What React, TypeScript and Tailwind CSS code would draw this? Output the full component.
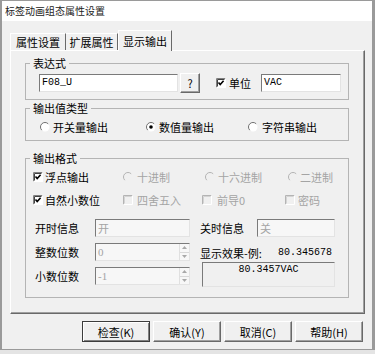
import type { ReactNode } from 'react'

function CheckBox({ checked = false, disabled = false }: { checked?: boolean; disabled?: boolean }) {
  return (
    <svg width="10" height="10" viewBox="0 0 10 10" className="shrink-0">
      <rect x="0" y="0" width="10" height="10" fill={disabled ? '#f0f0f0' : '#fff'} />
      <path d="M0.5 9.5V0.5H9.5" stroke={disabled ? '#b4b4b4' : '#808080'} fill="none" />
      <path d="M1.5 8.5V1.5H8.5" stroke={disabled ? '#d4d4d4' : '#404040'} fill="none" />
      <path d="M0.5 9.5H9.5V0.5" stroke="#fff" fill="none" />
      {checked && <path d="M2.5 4.6 L4.2 6.6 L7.6 2.8" stroke="#000" strokeWidth="1.6" fill="none" />}
    </svg>
  )
}

function Radio({ checked = false, disabled = false }: { checked?: boolean; disabled?: boolean }) {
  return (
    <svg width="10" height="10" viewBox="0 0 10 10" className="shrink-0">
      <circle cx="5" cy="5" r="4.5" fill={disabled ? '#f0f0f0' : '#fff'} />
      <path d="M8.2 1.8A4.5 4.5 0 0 0 1.8 8.2" stroke={disabled ? '#b4b4b4' : '#707070'} fill="none" />
      {checked && <circle cx="5" cy="5" r="1.8" fill="#000" />}
    </svg>
  )
}

function Group({ title, className = '', children }: { title: string; className?: string; children: ReactNode }) {
  return (
    <fieldset className={'border border-[#b4b4b4] p-0 ' + className}>
      <legend className="ml-[4px] px-[3px] leading-[14px]">{title}</legend>
      {children}
    </fieldset>
  )
}

function Field({ value, className = '', disabled = false, mono = false, spin = false }: {
  value: string
  className?: string
  disabled?: boolean
  mono?: boolean
  spin?: boolean
}) {
  return (
    <div
      className={
        'h-[18px] flex items-stretch border border-t-[#7a7a7a] border-l-[#7a7a7a] border-b-[#e3e3e3] border-r-[#e3e3e3] ' +
        (disabled ? 'bg-[#f7f7f7] text-[#a4a4a4] ' : 'bg-white text-black ') +
        className
      }
    >
      <span
        className={
          'flex-1 flex items-center pl-[2px] ' +
          (mono ? "[font-family:'Liberation_Mono',monospace] text-[10px]" : '')
        }
      >
        {value}
      </span>
      {spin && (
        <div className="w-[10px] flex flex-col border-l border-[#e0e0e0]">
          <div className="flex-1 flex items-center justify-center border-b border-[#d8d8d8]">
            <svg width="5" height="3" viewBox="0 0 5 3"><path d="M0 3 L2.5 0 L5 3Z" fill="#a8a8a8" /></svg>
          </div>
          <div className="flex-1 flex items-center justify-center">
            <svg width="5" height="3" viewBox="0 0 5 3"><path d="M0 0 L2.5 3 L5 0Z" fill="#a8a8a8" /></svg>
          </div>
        </div>
      )}
    </div>
  )
}

function Button({ children, primary = false }: { children: ReactNode; primary?: boolean }) {
  return (
    <div
      className={
        'w-[68px] h-[21px] flex items-center justify-center bg-[#f0f0f0] border ' +
        (primary
          ? 'border-[#3c3c3c] shadow-[inset_1px_1px_0_#fff,inset_-1px_-1px_0_#808080]'
          : 'border-t-white border-l-white border-b-[#696969] border-r-[#696969] shadow-[inset_-1px_-1px_0_#a0a0a0]')
      }
    >
      {children}
    </div>
  )
}

export default function App() {
  return (
    <div className="w-[375px] h-[354px] overflow-hidden bg-[#e4e4e4] text-[11px] leading-[14px] text-black [font-family:'Noto_Sans_CJK_SC',sans-serif]">
      <div className="h-[350px] flex flex-col border-t border-b border-l-2 border-r-[3px] border-[#9a9a9a] bg-[#f0f0f0]">
        <div className="h-[20px] shrink-0 bg-white pl-[3px] flex items-center text-[10px] text-[#222]">标签动画组态属性设置</div>

        <div className="flex-1 pl-[8px] pr-[7px] pt-[9px]">
          {/* tabs */}
          <div className="flex items-end h-[20px]">
            <div className="w-[56px] h-[17px] flex items-center justify-center border-t border-l border-r border-t-white border-l-white border-r-[#696969]">
              属性设置
            </div>
            <div className="w-[52px] h-[17px] flex items-center justify-center border-t border-r border-t-white border-r-[#696969]">
              扩展属性
            </div>
            <div className="relative z-10 -mb-px w-[54px] h-[21px] flex items-center justify-center bg-[#f0f0f0] border-t border-l border-r border-t-white border-l-white border-r-[#696969]">
              显示输出
            </div>
          </div>

          {/* tab panel */}
          <div className="h-[264px] border border-t-white border-l-white border-b-[#696969] border-r-[#696969] shadow-[inset_-1px_-1px_0_#a0a0a0] pl-[14px] pr-[15px] pt-[5px]">
            <Group title="表达式">
              <div className="flex items-center h-[22px] pl-[13px] mt-[2px] mb-[5px]">
                <Field value="F08_U" mono className="w-[139px]" />
                <div className="ml-[2px] w-[20px] h-[20px] flex items-center justify-center border border-t-white border-l-white border-b-[#696969] border-r-[#696969] shadow-[inset_-1px_-1px_0_#a0a0a0]">
                  ?
                </div>
                <div className="ml-[16px] flex items-center gap-[3px]">
                  <CheckBox checked />
                  <span>单位</span>
                </div>
                <Field value="VAC" mono className="ml-[10px] w-[80px]" />
              </div>
            </Group>

            <Group title="输出值类型" className="mt-px">
              <div className="flex items-center h-[20px] pl-[14px] mt-[2px] mb-[3px]">
                <div className="w-[106px] flex items-center gap-[3px]">
                  <Radio />
                  <span>开关量输出</span>
                </div>
                <div className="w-[102px] flex items-center gap-[3px]">
                  <Radio checked />
                  <span>数值量输出</span>
                </div>
                <div className="flex items-center gap-[4px]">
                  <Radio />
                  <span>字符串输出</span>
                </div>
              </div>
            </Group>

            <Group title="输出格式" className="mt-[10px]">
              <div className="grid grid-cols-[90px_82px_83px_1fr] items-center h-[20px] pl-[7px] mt-[2px]">
                <div className="flex items-center gap-[2px]">
                  <CheckBox checked />
                  <span>浮点输出</span>
                </div>
                <div className="flex items-center gap-[4px] text-[#a4a4a4]">
                  <Radio disabled />
                  <span>十进制</span>
                </div>
                <div className="flex items-center gap-[3px] text-[#a4a4a4]">
                  <Radio disabled />
                  <span>十六进制</span>
                </div>
                <div className="flex items-center gap-[2px] text-[#a4a4a4]">
                  <Radio disabled />
                  <span>二进制</span>
                </div>
              </div>
              <div className="grid grid-cols-[90px_79px_83px_1fr] items-center h-[20px] pl-[7px] mt-[3px]">
                <div className="flex items-center gap-[2px]">
                  <CheckBox checked />
                  <span>自然小数位</span>
                </div>
                <div className="flex items-center gap-[4px] text-[#a4a4a4]">
                  <CheckBox disabled />
                  <span>四舍五入</span>
                </div>
                <div className="flex items-center gap-[5px] text-[#a4a4a4]">
                  <CheckBox disabled />
                  <span>前导0</span>
                </div>
                <div className="flex items-center gap-[3px] text-[#a4a4a4]">
                  <CheckBox disabled />
                  <span>密码</span>
                </div>
              </div>

              <div className="flex pl-[9px] mt-[9px] mb-[10px]">
                <div className="flex flex-col gap-[6px]">
                  <div className="flex items-center h-[18px]">
                    <span className="w-[60px]">开时信息</span>
                    <Field value="开" disabled className="w-[95px]" />
                  </div>
                  <div className="flex items-center h-[18px]">
                    <span className="w-[60px]">整数位数</span>
                    <Field value="0" disabled spin className="w-[95px] [font-family:'Liberation_Serif',serif]" />
                  </div>
                  <div className="flex items-center h-[18px]">
                    <span className="w-[60px]">小数位数</span>
                    <Field value="-1" disabled spin className="w-[95px] [font-family:'Liberation_Serif',serif]" />
                  </div>
                </div>

                <div className="ml-[10px] flex flex-col">
                  <div className="flex items-center h-[18px]">
                    <span className="w-[57px]">关时信息</span>
                    <Field value="关" disabled className="w-[78px]" />
                  </div>
                  <div className="flex items-center h-[14px] mt-[9px]">
                    <span className="w-[78px]">显示效果-例:</span>
                    <span className="[font-family:'Liberation_Mono',monospace] text-[10px]">80.345678</span>
                  </div>
                  <div className="ml-[2px] mt-[2px] w-[133px] h-[25px] border border-t-[#7a7a7a] border-l-[#7a7a7a] border-b-[#e3e3e3] border-r-[#e3e3e3] bg-[#f0f0f0] flex justify-center pt-[1px] [font-family:'Liberation_Mono',monospace] text-[10px] leading-[12px]">
                    80.3457VAC
                  </div>
                </div>
              </div>
            </Group>
          </div>

          {/* buttons */}
          <div className="flex justify-end gap-[3px] mt-[7px] pr-[2px]">
            <Button primary>检查(K)</Button>
            <Button>确认(Y)</Button>
            <Button>取消(C)</Button>
            <Button>帮助(H)</Button>
          </div>
        </div>
      </div>
    </div>
  )
}
